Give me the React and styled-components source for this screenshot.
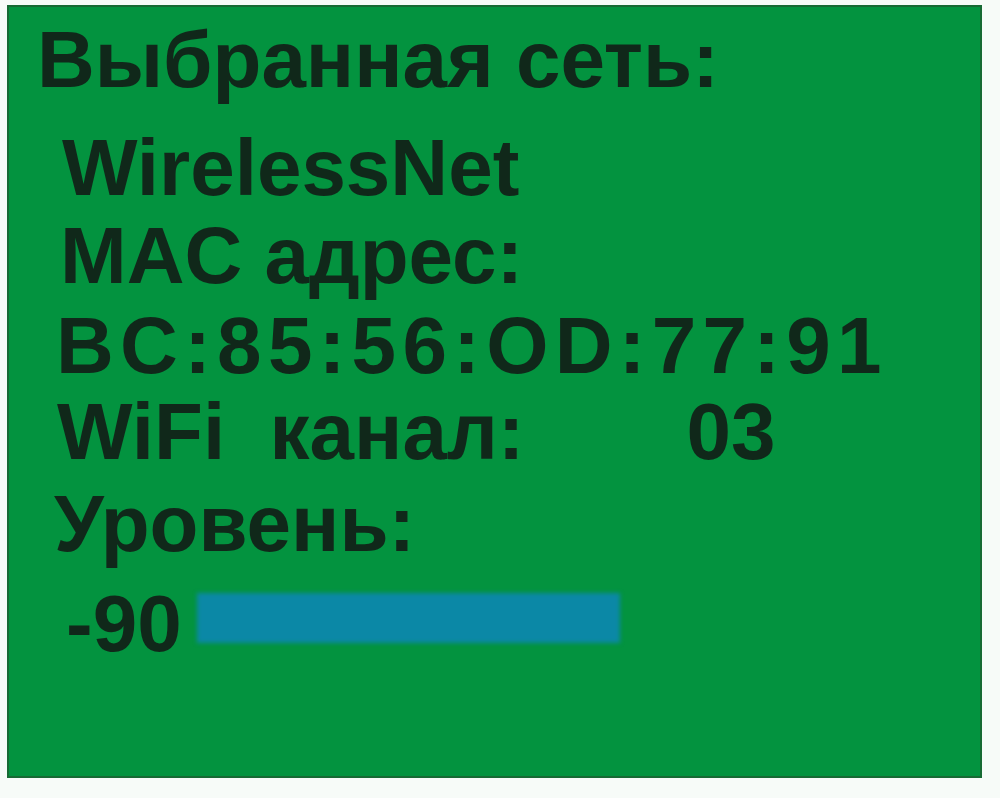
import React from "react";
import styled, { createGlobalStyle } from "styled-components";

const GlobalStyle = createGlobalStyle`
  html, body {
    margin: 0;
    padding: 0;
    background: #f7fbf8;
  }
`;

const Screen = styled.div`
  box-sizing: border-box;
  margin: 5px 0 0 7px;
  width: 975px;
  height: 773px;
  padding-top: 9px;
  background: #03933f;
  border: 2px solid #176a34;
  font-family: "Liberation Sans", Arial, sans-serif;
  font-weight: bold;
  font-size: 80px;
  line-height: 88px;
  color: #10281a;
`;

const Line = styled.div`
  display: flex;
  align-items: center;
  white-space: pre;
  padding-left: ${(p) => p.indent}px;
  margin-top: ${(p) => p.top || 0}px;
  letter-spacing: ${(p) => p.spacing || 0}px;
`;

const Channel = styled.span`
  margin-left: 162px;
`;

const LevelBar = styled.div`
  width: 423px;
  height: 50px;
  margin: 0 0 12px 15px;
  background: #0b88a6;
  filter: blur(2px);
`;

const App = () => {
  return (
    <>
      <GlobalStyle />
      <Screen>
        <Line indent={28}>Выбранная сеть:</Line>
        <Line indent={53} top={20}>WirelessNet</Line>
        <Line indent={51}>MAC адрес:</Line>
        <Line indent={47} top={2} spacing={6.3}>BC:85:56:OD:77:91</Line>
        <Line indent={48} top={-2}>
          WiFi  канал:<Channel>03</Channel>
        </Line>
        <Line indent={45} top={4}>Уровень:</Line>
        <Line indent={57} top={12}>
          -90
          <LevelBar />
        </Line>
      </Screen>
    </>
  );
};

export default App;
